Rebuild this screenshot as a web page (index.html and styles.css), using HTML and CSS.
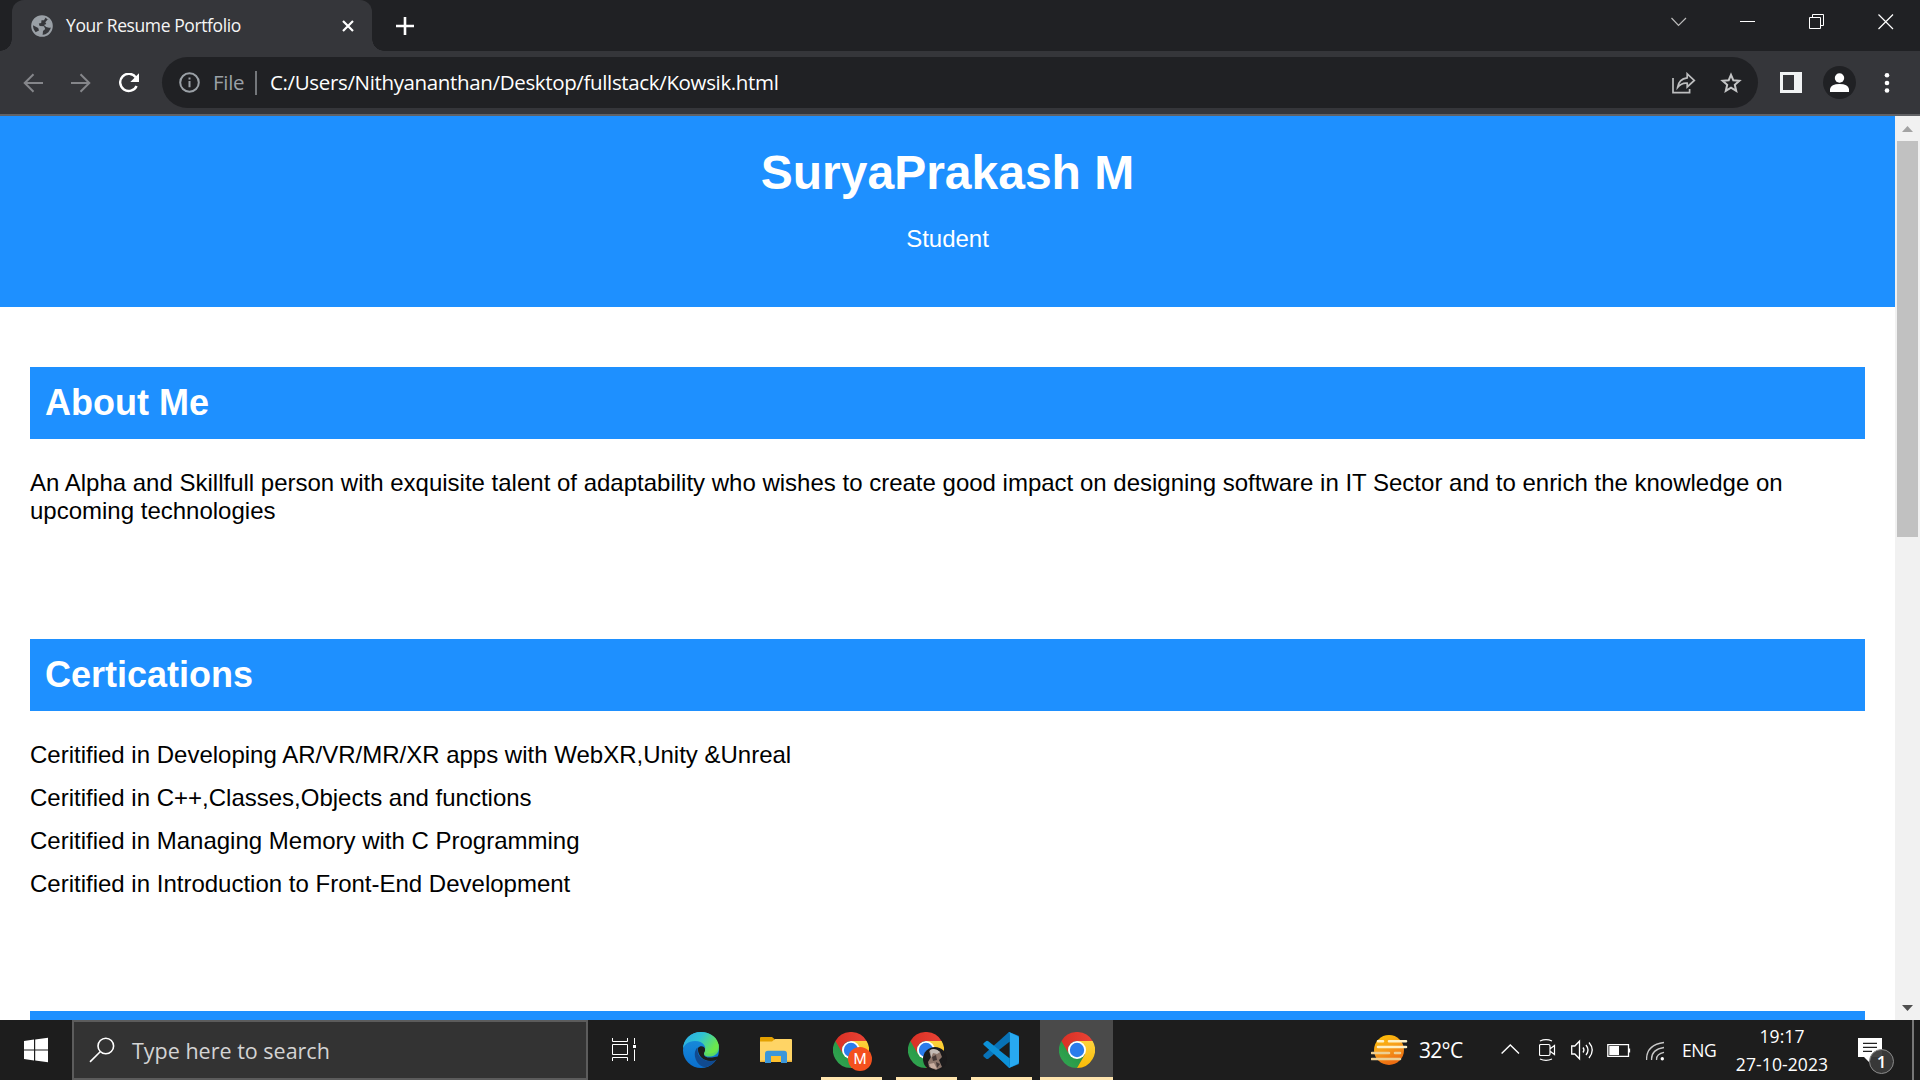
FILE: index.html
```html
<!DOCTYPE html>
<html lang="en">
<head>
<meta charset="utf-8">
<title>Your Resume Portfolio</title>
<link rel="stylesheet" href="styles.css">
</head>
<body>
<svg class="defs" width="0" height="0" aria-hidden="true">
  <defs>
    <linearGradient id="cr" x1="0" y1="0" x2="1" y2="0"><stop offset="0" stop-color="#d93025"/><stop offset="1" stop-color="#ea4335"/></linearGradient>
    <linearGradient id="cy" x1="0" y1="0" x2="0" y2="1"><stop offset="0" stop-color="#fdd23d"/><stop offset="1" stop-color="#fbbc05"/></linearGradient>
    <linearGradient id="cg" x1="0" y1="1" x2="1" y2="0"><stop offset="0" stop-color="#34a853"/><stop offset="1" stop-color="#1e8e3e"/></linearGradient>
    <symbol id="chrome" viewBox="0 0 36 36">
      <path d="M18 18 L2.4 9 A18 18 0 0 0 18 36 L25.8 22.5 Z" fill="url(#cg)"/>
      <path d="M18 9 H33.6 A18 18 0 0 1 18 36 L25.8 22.5 Z" fill="url(#cy)"/>
      <path d="M18 9 H33.6 A18 18 0 0 0 2.4 9 L10.2 22.5 A9 9 0 0 1 18 9 Z" fill="url(#cr)"/>
      <circle cx="18" cy="18" r="9" fill="#fff"/>
      <circle cx="18" cy="18" r="7.2" fill="#2a7cec"/>
    </symbol>
  </defs>
</svg>

<header class="tabstrip">
  <div class="tab">
    <svg class="globe" width="22" height="22" viewBox="0 0 22 22"><circle cx="11" cy="11" r="9.9" fill="#36373b" stroke="#9aa0a6" stroke-width="1.8"/><path d="M2 6.5 Q5 1.5 10.5 1.2 Q13.8 1.2 14.5 2.8 L13 5.2 L10.5 5.2 L10.2 8 L7.8 8.6 L8.6 11 L13 11.3 L14.2 14 L12 16 L11.6 20.5 Q7 20.5 4 17.5 L8 15.5 L7.2 13 L1.5 10 Z" fill="#9aa0a6"/><path d="M17 4 L14.3 7.2 L15.3 9 L13 10 Q15.5 13.6 20 12.5 Q21.5 7.5 17 4 Z" fill="#9aa0a6"/></svg>
    <span class="tab-title">Your Resume Portfolio</span>
    <svg class="tab-close" width="14" height="14" viewBox="0 0 14 14"><path d="M2 2 L12 12 M12 2 L2 12" stroke="#fff" stroke-width="2.2"/></svg>
  </div>
  <svg class="new-tab" width="18" height="18" viewBox="0 0 18 18"><path d="M9 0 V18 M0 9 H18" stroke="#fff" stroke-width="2.6"/></svg>
  <div class="window-controls">
    <svg width="16" height="16" viewBox="0 0 16 16"><path d="M.5 4 L7.5 11.5 L15 4" fill="none" stroke="#bbb" stroke-width="1.2"/></svg>
    <svg width="16" height="16" viewBox="0 0 16 16"><path d="M0 7.5 H15" stroke="#fff"/></svg>
    <svg width="16" height="16" viewBox="0 0 16 16"><path d="M.5 3.5 H11.5 V14.5 H.5 Z M3.5 3.5 V.5 H14.5 V11.5 H11.5" fill="none" stroke="#fff"/></svg>
    <svg width="16" height="16" viewBox="0 0 16 16"><path d="M.5 .5 L15 15 M15 .5 L.5 15" stroke="#fff" stroke-width="1.2"/></svg>
  </div>
</header>

<nav class="toolbar">
  <div class="nav-buttons">
    <svg width="21" height="20" viewBox="0 0 21 20"><path d="M20 10 H2 M10.5 1.2 L1.7 10 L10.5 18.8" fill="none" stroke="#85868a" stroke-width="2"/></svg>
    <svg width="21" height="20" viewBox="0 0 21 20"><path d="M0 10 H18 M9.5 1.2 L18.3 10 L9.5 18.8" fill="none" stroke="#85868a" stroke-width="2"/></svg>
    <svg width="22" height="20" viewBox="1 0 22 20"><path d="M17.8 4.4 A8.6 8.6 0 1 0 18.6 13" fill="none" stroke="#fff" stroke-width="2.4"/><path d="M21 .3 V9 H12.3 Z" fill="#fff"/></svg>
  </div>
  <div class="omnibox">
    <svg width="21" height="21" viewBox="0 0 21 21"><circle cx="10.5" cy="10.5" r="9.3" fill="none" stroke="#9aa0a6" stroke-width="2"/><path d="M10.5 9 V15.3 M10.5 5.4 V7.6" stroke="#9aa0a6" stroke-width="2"/></svg>
    <span class="scheme">File</span>
    <span class="separator"></span>
    <span class="url">C:/Users/Nithyananthan/Desktop/fullstack/Kowsik.html</span>
    <svg class="share" width="24" height="22" viewBox="0 0 24 22"><path d="M1 6 V20.6 H17.6 V17" fill="none" stroke="#bdbebf" stroke-width="1.7"/><path d="M15.2 1.8 L22.3 8.5 L15.2 15 V11.2 Q9.5 10.6 5.6 15.4 Q6.7 6.9 15.2 5.8 Z" fill="none" stroke="#bdbebf" stroke-width="1.7"/></svg>
    <svg class="star" width="22" height="22" viewBox="0 0 22 22"><path d="M11 2.8 L13.3 8.2 L19.4 8.8 L14.8 12.8 L16.2 18.8 L11 15.6 L5.8 18.8 L7.2 12.8 L2.6 8.8 L8.7 8.2 Z" fill="none" stroke="#c4c5c6" stroke-width="2"/></svg>
  </div>
  <svg class="side-panel" width="22" height="21" viewBox="0 0 22 21"><path fill-rule="evenodd" d="M0 0 H22 V21 H0 Z M3 3 V18 H14 V3 Z" fill="#f1f3f4"/></svg>
  <svg class="profile" width="33" height="33" viewBox="0 0 33 33"><circle cx="16.5" cy="16.5" r="16.5" fill="#202124"/><circle cx="16.5" cy="12" r="4.7" fill="#fff"/><path d="M7 26 V23 Q8 18 16.5 18 Q25 18 26 23 V26 Z" fill="#fff"/></svg>
  <svg class="menu" width="6" height="22" viewBox="0 0 6 22"><circle cx="3" cy="3.3" r="2.3" fill="#fff"/><circle cx="3" cy="11" r="2.3" fill="#fff"/><circle cx="3" cy="18.5" r="2.3" fill="#fff"/></svg>
</nav>

<div class="viewport">
  <main class="page">
    <div class="banner">
      <h1>SuryaPrakash M</h1>
      <p>Student</p>
    </div>
    <section>
      <h2>About Me</h2>
      <p>An Alpha and Skillfull person with exquisite talent of adaptability who wishes to create good impact on designing software in IT Sector and to enrich the knowledge on upcoming technologies</p>
    </section>
    <section class="certifications">
      <h2>Certications</h2>
      <ul>
        <li>Ceritified in Developing AR/VR/MR/XR apps with WebXR,Unity &amp;Unreal</li>
        <li>Ceritified in C++,Classes,Objects and functions</li>
        <li>Ceritified in Managing Memory with C Programming</li>
        <li>Ceritified in Introduction to Front-End Development</li>
      </ul>
    </section>
    <section>
      <h2></h2>
    </section>
  </main>
  <div class="scrollbar">
    <svg width="25" height="25" viewBox="0 0 25 25"><path d="M7 16 L12.5 10 L18 16 Z" fill="#a3a3a3"/></svg>
    <div class="thumb"></div>
    <svg class="down" width="25" height="25" viewBox="0 0 25 25"><path d="M7 10 L12.5 16 L18 10 Z" fill="#505050"/></svg>
  </div>
</div>

<footer class="taskbar">
  <svg class="start" width="72" height="60" viewBox="0 0 72 60"><path d="M24 21 L34 19.6 V29.4 H24 Z M35.2 19.4 L48 17.7 V29.4 H35.2 Z M24 30.6 H34 V40.4 L24 39 Z M35.2 30.6 H48 V42.2 L35.2 40.5 Z" fill="#fff"/></svg>
  <div class="search">
    <svg width="26" height="26" viewBox="0 0 26 26"><circle cx="16.8" cy="9" r="7.8" fill="none" stroke="#fff" stroke-width="1.6"/><path d="M11.2 14.7 L1 24.9" stroke="#fff" stroke-width="1.6"/></svg>
    <span>Type here to search</span>
  </div>
  <div class="apps">
    <div class="app task-view">
      <svg width="36" height="36" viewBox="0 0 36 36"><path d="M6.5 6 V9.5 H21.5 V6 M6.5 12.5 H21.5 V22.5 H6.5 Z M6.5 29 V25.5 H21.5 V29 M28.5 6 V12 M28.5 17.5 V29" fill="none" stroke="#fff"/><rect x="27" y="13" width="3" height="3" fill="#fff"/></svg>
    </div>
    <div class="app">
      <svg width="36" height="36" viewBox="0 0 36 36">
        <defs>
          <linearGradient id="e1" x1="0" y1="0" x2="1" y2=".45"><stop offset="0" stop-color="#2aa8e8"/><stop offset=".5" stop-color="#30c3d4"/><stop offset="1" stop-color="#6be84c"/></linearGradient>
          <linearGradient id="e2" x1="0" y1="0" x2="0" y2="1"><stop offset="0" stop-color="#1b91dc"/><stop offset="1" stop-color="#0a6fce"/></linearGradient>
        </defs>
        <circle cx="18" cy="18" r="18" fill="url(#e2)"/>
        <path d="M14.5 15.5 C8.5 21 13 34.5 23 35.3 C28 34 31 31.5 33.3 27.3 C25 31.5 16 27 14.8 20.5 Z" fill="#114a8f"/>
        <path d="M15 16 C17 13 22 14 22.2 17.5 C22.4 19.5 21 20.5 21 22.2 C21 24.5 24 26 29 25.5 L37 24 L33 28 C24 31.5 14 26 15 16 Z" fill="#1d1d1d"/>
        <path d="M22 17.5 C22.4 19.5 20.8 20.5 21 22 C22 25.6 29 25 32 23 C36 20.5 36.5 16 35.5 12 L24 10 Z" fill="#5ada62"/>
        <path d="M0 17 C0 7 8 0 18 0 C26 0 33 4 35.2 11 C35.8 14 35.5 18 32 20 C29 22 25 22 22.5 20.5 C23.5 15 21 9 12 9 C5 9 1 13 0 17 Z" fill="url(#e1)"/>
      </svg>
    </div>
    <div class="app">
      <svg width="36" height="36" viewBox="0 0 36 36"><path d="M2 6 Q2 5 3 5 H14 L16.5 7 V12 H2 Z" fill="#e3a000"/><path d="M2 9.5 H14 L17 7 H33 Q34 7 34 8 V30 H2 Z" fill="#ffd465"/><path d="M2 28.5 H34 V30 H2 Z" fill="#edb338"/><path d="M7 31 V22 Q7 18.7 10 18.7 H26 Q29 18.7 29 22 V31 H23 V24 H13 V31 Z" fill="#3c97da"/><path d="M13 24 H23 V30 H13 Z" fill="#fec12f"/></svg>
    </div>
    <div class="app running">
      <svg width="36" height="36"><use href="#chrome"/></svg>
      <span class="badge badge-letter">M</span>
    </div>
    <div class="app running">
      <svg width="36" height="36"><use href="#chrome"/></svg>
      <svg class="badge" width="24" height="24" viewBox="0 0 24 24"><circle cx="12" cy="12" r="12" fill="#1b1a1b"/><path d="M6 4 Q12 0 17 5 L19 10 L16 13 L19 20 L13 23 L6 20 L5 15 L8 10 Z" fill="#8d766b"/><path d="M7 3 Q12 0 17 5 L14 7 L10 6 L8 11 Z" fill="#c4bbb5"/><path d="M9 10 L13 8 L14 13 L10 14 Z M13 15 L17 17 L14 21 Z" fill="#443735"/><path d="M6 17 L11 16 L14 22 L8 21 Z" fill="#c9aea0"/></svg>
    </div>
    <div class="app running">
      <svg width="36" height="36" viewBox="0 0 36 36"><path d="M26 0 L36 4 V32 L26 36 L12 22 Z" fill="#0877b9"/><path d="M26 0 L25.5 10 L5 27 L3.5 27 L.5 24.5 Q0 23.5 .8 22.5 Z" fill="#0872b7"/><path d="M.8 13 Q-.2 12 .8 11 L3.3 9 Q4.3 8.5 5.3 9.2 L26.5 26 V36 Z" fill="#0d91d8"/><path d="M26 0 L34.5 4 Q36 5 36 6.3 V29.7 Q36 31.2 34.5 32 L26 36 Q27 35 27 33 V3 Q27 1 26 0 Z" fill="#28a9f1"/><path d="M26.5 9.8 L16 18 L26.5 26.2 Z" fill="#1d1d1d"/></svg>
    </div>
    <div class="app running active">
      <svg width="36" height="36"><use href="#chrome"/></svg>
    </div>
  </div>
  <div class="tray">
    <svg width="48" height="60" viewBox="0 0 48 60"><defs><linearGradient id="sun" x1="0" y1="0" x2=".4" y2="1"><stop offset="0" stop-color="#ffc400"/><stop offset=".5" stop-color="#f7a11b"/><stop offset="1" stop-color="#ed6d11"/></linearGradient></defs><circle cx="18" cy="30" r="15" fill="url(#sun)"/><path d="M7 21.3 H12 M18 21.3 H35 M7 27 H35" stroke="#fff0c4" stroke-width="2.6" stroke-linecap="round"/><path d="M1 33 H18 M24 33 H29 M1 39 H29" stroke="#edcf93" stroke-width="2.6" stroke-linecap="round"/></svg>
    <span class="temp">32°C</span>
    <svg width="38" height="60" viewBox="0 0 38 60"><path d="M.6 33.5 L9.3 25 L18 33.5" fill="none" stroke="#fff" stroke-width="1.4"/></svg>
    <svg width="32" height="60" viewBox="0 0 32 60"><path d="M1.5 24.5 H9.5 Q11 24.5 11 26 V34 Q11 35.5 9.5 35.5 H1.5 Q.5 35.5 .5 34 V26 Q.5 24.5 1.5 24.5 Z M11.5 28.5 L15.5 25.5 V34.5 L11.5 31.5 M1 21 Q7 18.3 13 21 M1 39 Q7 41.7 13 39" fill="none" stroke="#fff" stroke-width="1.2"/></svg>
    <svg width="36" height="60" viewBox="0 0 36 60"><path d="M.7 26 H3.8 L8.5 21.2 V38.8 L3.8 34 H.7 Z M12 27.5 Q14 30 12 32.5 M15 25 Q19 30 15 35 M18 22.5 Q24.5 30 18 38" fill="none" stroke="#fff" stroke-width="1.3"/></svg>
    <svg width="39" height="60" viewBox="0 0 39 60"><path d="M.8 24.7 H21.5 V36.3 H.8 Z M22.5 28.5 V32.5" fill="none" stroke="#fff" stroke-width="1.3"/><rect x="2.3" y="26" width="9.7" height="9" fill="#fff"/></svg>
    <svg width="36" height="60" viewBox="0 0 36 60"><path d="M.6 40 Q0 25 18 22.5 M5.6 40 Q5 29.5 18 27.5 M10.6 40 Q10 34 18 32.4" fill="none" stroke="#c9c9c9" stroke-width="1.3"/><circle cx="16.3" cy="38.7" r="1.7" fill="#fff"/></svg>
    <span class="lang">ENG</span>
    <div class="clock"><span>19:17</span><span class="date">27-10-2023</span></div>
    <svg class="notifications" width="72" height="60" viewBox="0 0 72 60"><path d="M18 18 H42 V37 H32 L29 42 L24 37 H18 Z" fill="#fff"/><path d="M23 23.3 H37 M23 27.3 H37 M23 31.3 H32" stroke="#222" stroke-width="1.2"/><circle cx="41.5" cy="41.5" r="12" fill="#3a3a3a" fill-opacity=".95" stroke="#8b8b8b"/><text x="41.5" y="47.5" text-anchor="middle">1</text></svg>
    <span class="show-desktop"></span>
  </div>
</footer>
</body>
</html>
```
FILE: styles.css
```css
* { box-sizing: border-box; margin: 0; padding: 0; }
body {
  width: 1920px;
  height: 1080px;
  display: flex;
  flex-direction: column;
  overflow: hidden;
  background: #fff;
  font-family: "Open Sans", "Noto Sans", sans-serif;
}
svg { display: block; flex: none; }
.defs { position: absolute; }

/* Tab strip */
.tabstrip {
  height: 51px;
  flex: none;
  display: flex;
  align-items: center;
  padding-left: 12px;
  background: #202124;
}
.tab {
  position: relative;
  width: 360px;
  height: 51px;
  display: flex;
  align-items: center;
  padding: 0 17px 0 19px;
  border-radius: 12px 12px 0 0;
  background: #35363a;
}
.tab::before, .tab::after {
  content: "";
  position: absolute;
  bottom: 0;
  width: 12px;
  height: 12px;
}
.tab::before { left: -12px; background: radial-gradient(circle at 0 0, transparent 11.5px, #35363a 12px); }
.tab::after { right: -12px; background: radial-gradient(circle at 100% 0, transparent 11.5px, #35363a 12px); }
.tab-title {
  margin-left: 13px;
  padding-bottom: 2px;
  color: #f5f5f5;
  font-size: 17.5px;
  letter-spacing: -0.4px;
  white-space: nowrap;
}
.tab-close { margin-left: auto; }
.new-tab { margin-left: 24px; }
.window-controls {
  display: flex;
  align-self: flex-start;
  gap: 53px;
  margin: 14px 26px 0 auto;
}

/* Toolbar */
.toolbar {
  height: 65px;
  flex: none;
  display: flex;
  align-items: center;
  padding-left: 23px;
  border-bottom: 2px solid #616265;
  background: #35363a;
}
.nav-buttons { display: flex; gap: 27px; width: 139px; }
.omnibox {
  display: flex;
  align-items: center;
  width: 1596px;
  height: 51px;
  padding: 0 16px 0 17px;
  border-radius: 26px;
  background: #202124;
  font-size: 20.5px;
  line-height: 28px;
  white-space: nowrap;
}
.scheme { width: 43px; margin-left: 13px; padding-bottom: 2px; color: #9aa0a6; letter-spacing: -0.3px; }
.separator { width: 2px; height: 24px; margin: 0 13px 0 -1px; background: #74777b; }
.url { padding-bottom: 2px; color: #fff; letter-spacing: -0.35px; }
.share { margin-left: auto; margin-right: 24px; }
.side-panel { margin-left: 22px; }
.profile { margin-left: 21px; }
.menu { margin-left: 28px; }

/* Page */
.viewport { height: 904px; flex: none; display: flex; overflow: hidden; }
.page {
  width: 1895px;
  font: 24px/28px "Liberation Sans", Arial, sans-serif;
  color: #000;
}
.banner {
  height: 191px;
  padding-top: 30px;
  background: #1e90ff;
  color: #fff;
  text-align: center;
}
h1 { margin-bottom: 25px; font-size: 48px; line-height: 54px; }
section { padding: 60px 30px 54px; }
.certifications { padding-bottom: 53px; }
h2 {
  height: 72px;
  margin-bottom: 30px;
  padding: 15px;
  background: #1e90ff;
  color: #fff;
  font-size: 36px;
  line-height: 42px;
}
ul { display: flex; flex-direction: column; gap: 15px; list-style: none; }
.scrollbar {
  width: 25px;
  display: flex;
  flex-direction: column;
  align-items: center;
  background: #f1f1f1;
}
.thumb { width: 21px; height: 396px; background: #c1c1c1; }
.down { margin-top: auto; }

/* Taskbar */
.taskbar {
  height: 60px;
  flex: none;
  display: flex;
  background: #1d1d1d;
  color: #fff;
}
.search {
  display: flex;
  align-items: center;
  gap: 17px;
  width: 516px;
  padding-left: 15px;
  border: 2px solid #5c5c5c;
  background: #333;
  color: #d4d4d4;
  font-size: 21.5px;
  white-space: nowrap;
}
.apps { display: flex; margin-left: 0.5px; }
.app {
  position: relative;
  width: 75px;
  display: flex;
  align-items: center;
  justify-content: center;
}
.task-view { padding-right: 5px; }
.running::after {
  content: "";
  position: absolute;
  left: 7.5px;
  bottom: 0;
  width: 61px;
  height: 3px;
  background: #ffe5ae;
}
.active { width: 73px; margin-left: 1.5px; background: #4a4a4a; }
.active::after { left: 0; width: 73px; }
.badge { position: absolute; left: 34.5px; top: 27px; }
.badge-letter {
  width: 24px;
  height: 24px;
  border-radius: 50%;
  background: #f4511e;
  font: 15px/24px Roboto, sans-serif;
  text-align: center;
}
.tray { display: flex; align-items: center; margin-left: auto; white-space: nowrap; }
.temp { width: 82px; font-size: 21px; letter-spacing: -0.7px; }
.lang { width: 42px; font-size: 17.5px; letter-spacing: -0.5px; }
.clock {
  width: 116px;
  display: flex;
  flex-direction: column;
  align-items: center;
  font-size: 17.5px;
  line-height: 28px;
  letter-spacing: 0.1px;
}
.notifications text { font: 600 17px "Open Sans", sans-serif; fill: #fff; }
.show-desktop { width: 8px; height: 60px; border-left: 2px solid #777; }
```
